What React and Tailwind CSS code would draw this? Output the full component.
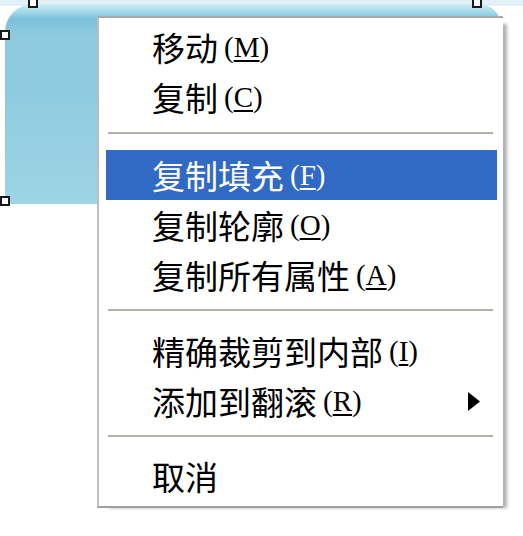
import React from "react";

const items = [
  { label: "移动", key: "M" },
  { label: "复制", key: "C" },
  { sep: true, mt: "mt-[10px]", mb: "mb-[16px]" },
  { label: "复制填充", key: "F", active: true },
  { label: "复制轮廓", key: "O" },
  { label: "复制所有属性", key: "A" },
  { sep: true, mt: "mt-[9px]", mb: "mb-[15px]" },
  { label: "精确裁剪到内部", key: "I" },
  { label: "添加到翻滚", key: "R", sub: true },
  { sep: true, mt: "mt-[9px]", mb: "mb-[14px]" },
  { label: "取消" },
];

function Handle({ className }) {
  return (
    <div
      className={`absolute w-[10px] h-[10px] border-[2px] border-[#1a1a1a] bg-white ${className}`}
    />
  );
}

export default function App() {
  return (
    <div className="relative w-[523px] h-[536px] bg-white overflow-hidden">
      {/* selected shape on the canvas */}
      <div className="absolute left-0 top-0 w-[523px] h-[6px] bg-[#e2f1f7]" />
      <div className="absolute left-[5px] top-[4px] w-[496px] h-[200px] rounded-tl-[28px] rounded-tr-[22px] rounded-b-[4px] bg-[linear-gradient(to_bottom,#d4edf6_0px,#a9dbec_7px,#7cc0db_15px,#8fcbe0_32px,#8fcbe0_90px,#9ed4e4_100%)]" />

      <Handle className="left-[28px] top-[-2px]" />
      <Handle className="left-[472px] top-[-2px]" />
      <Handle className="left-0 top-[30px]" />
      <Handle className="left-0 top-[196px]" />

      {/* context menu */}
      <div
        className="absolute left-[97px] top-[16px] w-[406px] bg-white border-t-[2px] border-l-[2px] border-b-[2px] border-t-[#a9a9a9] border-l-[#bdbdbd] border-b-[#a0a0a0] pt-[4px] pb-[5px] shadow-[8px_4px_3px_-4px_rgba(0,0,0,0.3)]"
        style={{ fontFamily: '"Noto Sans CJK SC", "Noto Sans", sans-serif' }}
      >
        {items.map((it, i) =>
          it.sep ? (
            <div
              key={i}
              className={`ml-[9px] mr-[10px] h-[2px] bg-[#b3b1aa] ${it.mt} ${it.mb}`}
            />
          ) : (
            <div
              key={i}
              className={`ml-[7px] mr-[6px] h-[50px] flex items-center pl-[46px] pr-[17px] text-[33px] leading-none ${
                it.active ? "bg-[#316ac5] text-white" : "text-black"
              }`}
            >
              <span>{it.label}</span>
              {it.key && (
                <span
                  className="ml-[6px] text-[29px]"
                  style={{ fontFamily: '"Liberation Serif", serif' }}
                >
                  (
                  <span className="underline decoration-[2px] underline-offset-[3px]">
                    {it.key}
                  </span>
                  )
                </span>
              )}
              {it.sub && (
                <svg
                  className="ml-auto"
                  width="12"
                  height="19"
                  viewBox="0 0 12 19"
                >
                  <polygon points="0,0 12,9.5 0,19" fill="#000" />
                </svg>
              )}
            </div>
          )
        )}
      </div>
    </div>
  );
}
